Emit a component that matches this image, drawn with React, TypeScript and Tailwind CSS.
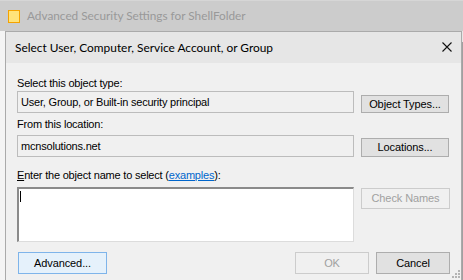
import React from 'react';

const label = 'text-[11px] leading-[13px] tracking-[-0.2px] text-black';

const Btn = ({ text, w, h, disabled = false, focus = false }: { text: string; w: string; h: string; disabled?: boolean; focus?: boolean }) => (
  <div
    className={`${w} ${h} shrink-0 flex items-center justify-center border text-[11px] tracking-[-0.1px] ${
      disabled
        ? 'border-[#cccccc] bg-[#f0f0f0] text-[#a0a0a0]'
        : focus
        ? 'border-[#7eb4ea] bg-[#e5f1fb] text-black'
        : 'border-[#adadad] bg-[#e1e1e1] text-black'
    }`}
  >
    {text}
  </div>
);

const App = () => {
  return (
    <div className="w-[463px] h-[280px] overflow-hidden flex flex-col bg-[#f0f0f0] font-['Liberation_Sans',sans-serif]">
      {/* Parent window title bar */}
      <div className="h-[31px] shrink-0 flex items-center bg-[#cccccc] border-t border-[#d6d6d6] pl-[8px]">
        <div className="w-[12px] h-[13px] border border-[#f5a300] bg-[#ffe37a] mr-[7px]" />
        <span className="font-['Lato',sans-serif] text-[11.8px] text-[#999999]">
          Advanced Security Settings for ShellFolder
        </span>
      </div>

      <div className="flex flex-1 min-h-0">
        <div className="w-[5px] shrink-0 bg-[#f4f4f4]" />

        {/* Dialog */}
        <div className="relative w-[457px] shrink-0 flex flex-col border-l border-t border-r border-[#aaaaaa] bg-[#f0f0f0]">
          <div className="h-[31px] shrink-0 flex items-center justify-between bg-[#e6e6e6] pl-[9px] pr-[9px]">
            <span className="font-['Lato',sans-serif] text-[11.9px] text-black">
              Select User, Computer, Service Account, or Group
            </span>
            <svg width="10" height="10" viewBox="0 0 10 10" className="mb-[1px]">
              <path d="M0.5 0.5 L9.5 9.5 M9.5 0.5 L0.5 9.5" stroke="#111" strokeWidth="1.1" />
            </svg>
          </div>

          <div className="flex flex-col pl-[11px] pr-[11px] pt-[14px]">
            <div className={label}>Select this object type:</div>
            <div className="flex gap-[7px] mt-[1px]">
              <div className={`${label} w-[337px] h-[22px] shrink-0 flex items-center pl-[3px] border border-[#bcbcbc] bg-[#f0f0f0]`}>
                User, Group, or Built-in security principal
              </div>
              <div className="mt-[4px]">
                <Btn text="Object Types..." w="w-[88px]" h="h-[18px]" />
              </div>
            </div>

            <div className={`${label} mt-[5px]`}>From this location:</div>
            <div className="flex gap-[7px] mt-[4px]">
              <div className={`${label} w-[337px] h-[22px] shrink-0 flex items-center pl-[3px] border border-[#bcbcbc] bg-[#f0f0f0]`}>
                mcnsolutions.net
              </div>
              <div className="mt-[3px]">
                <Btn text="Locations..." w="w-[88px]" h="h-[19px]" />
              </div>
            </div>

            <div className={`${label} mt-[12px]`}>
              <span className="underline">E</span>nter the object name to select (
              <span className="text-[#0066cc] underline">examples</span>):
            </div>
            <div className="flex gap-[7px] mt-[5px]">
              <div className="w-[337px] h-[55px] shrink-0 border-t-2 border-l-2 border-r border-b border-t-[#8a8a8a] border-l-[#8a8a8a] border-r-[#dcdcdc] border-b-[#dcdcdc] bg-white pl-[1px] pt-[2px]">
                <div className="w-[1px] h-[11px] bg-black" />
              </div>
              <div className="mt-[1px]">
                <Btn text="Check Names" w="w-[89px]" h="h-[21px]" disabled />
              </div>
            </div>

            <div className="flex gap-[7px] mt-[10px]">
              <div className="ml-[1px]">
                <Btn text="Advanced..." w="w-[89px]" h="h-[22px]" focus />
              </div>
              <div className="ml-auto">
                <Btn text="OK" w="w-[74px]" h="h-[22px]" disabled />
              </div>
              <Btn text="Cancel" w="w-[74px]" h="h-[22px]" />
            </div>
          </div>

          {/* size grip */}
          <svg width="8" height="8" viewBox="0 0 8 8" className="absolute right-[1px] top-[238px]">
            <rect x="6" y="0" width="2" height="2" fill="#b4b4b4" />
            <rect x="3" y="3" width="2" height="2" fill="#b4b4b4" />
            <rect x="6" y="3" width="2" height="2" fill="#b4b4b4" />
            <rect x="0" y="6" width="2" height="2" fill="#b4b4b4" />
            <rect x="3" y="6" width="2" height="2" fill="#b4b4b4" />
            <rect x="6" y="6" width="2" height="2" fill="#b4b4b4" />
          </svg>
        </div>

        <div className="w-[1px] shrink-0 flex flex-col">
          <div className="h-[11px] bg-[#e6e6e6]" />
          <div className="flex-1 bg-[#a0a0a0]" />
        </div>
      </div>
    </div>
  );
};

export default App;
